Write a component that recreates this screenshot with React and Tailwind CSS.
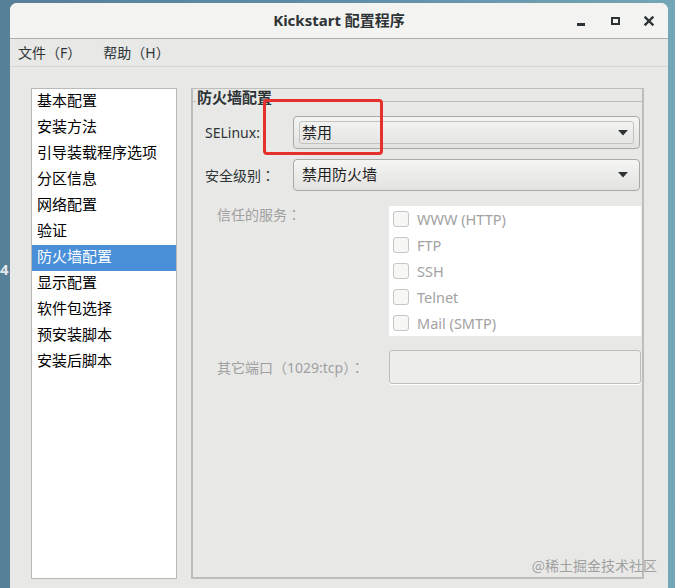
import React from "react";

const items = [
  "基本配置",
  "安装方法",
  "引导装载程序选项",
  "分区信息",
  "网络配置",
  "验证",
  "防火墙配置",
  "显示配置",
  "软件包选择",
  "预安装脚本",
  "安装后脚本",
];

const services = ["WWW (HTTP)", "FTP", "SSH", "Telnet", "Mail (SMTP)"];

function Colon() {
  return <span className="font-['Noto_Sans_CJK_JP',sans-serif]">：</span>;
}

function Arrow() {
  return (
    <svg width="10" height="6" viewBox="0 0 10 6" className="shrink-0">
      <polygon points="0,0 10,0 5,5.5" fill="#2e3436" />
    </svg>
  );
}

function Combo({ text, focused }) {
  return (
    <div className="flex-1 h-full rounded-[4px] border border-[#a9a9a7] bg-gradient-to-b from-[#f5f5f4] to-[#e2e2e1] px-[5px] py-[4px] flex">
      <div
        className={
          "flex-1 flex items-center pl-[2px] pr-[5px] rounded-[3px] border " +
          (focused ? "border-[#c2c2c0]" : "border-transparent")
        }
      >
        <span className="flex-1 text-[15px] text-[#1e1e1e] leading-none pb-[1px]">{text}</span>
        <Arrow />
      </div>
    </div>
  );
}

export default function App() {
  return (
    <div className="relative w-[675px] h-[588px] overflow-hidden bg-gradient-to-r from-[#567f98] via-[#5f8ea6] to-[#73a6b7] font-['Noto_Sans','Noto_Sans_CJK_SC',sans-serif] flex">
      <span className="absolute left-[0px] top-[259px] text-[15px] font-bold text-[#e4e8ea] leading-[20px]">4</span>

      <div className="ml-[10px] mt-[3px] w-[658px] h-[585px] flex flex-col bg-[#e8e8e7] rounded-t-[7px] overflow-hidden">
        {/* Title bar */}
        <div className="h-[36px] shrink-0 bg-[#f3f3f2] border-b border-[#b0b0ad] grid grid-cols-[1fr_auto_1fr] items-center">
          <div />
          <div className="text-[15px] font-bold text-[#2e3436] leading-none">Kickstart 配置程序</div>
          <div className="flex justify-end pr-[2px] h-full items-center">
            <div className="w-[34px] h-[20px] flex items-center justify-center">
              <div className="w-[8px] h-[3px] bg-[#2e3436] mt-[7px]" />
            </div>
            <div className="w-[34px] h-[20px] flex items-center justify-center">
              <div className="w-[9px] h-[8px] border-2 border-[#2e3436]" />
            </div>
            <div className="w-[34px] h-[20px] flex items-center justify-center">
              <svg width="10" height="10" viewBox="0 0 10 10">
                <path d="M1.5 1.5 L8.5 8.5 M8.5 1.5 L1.5 8.5" stroke="#2e3436" strokeWidth="2.4" strokeLinecap="square" />
              </svg>
            </div>
          </div>
        </div>

        {/* Menu bar */}
        <div className="h-[28px] shrink-0 border-b border-[#d6d6d4] flex items-center text-[14px] text-[#2e3436] gap-[6px]">
          <span className="px-[8px]">文件（F）</span>
          <span className="px-[8px]">帮助（H）</span>
        </div>

        {/* Content */}
        <div className="flex-1 flex pt-[21px] pl-[21px] pr-[24px] pb-[9px] gap-[14px]">
          {/* Sidebar list */}
          <div className="w-[146px] bg-white border border-[#b9b9b7] flex flex-col">
            {items.map((t, i) => (
              <div
                key={t}
                className={
                  "h-[26px] shrink-0 flex items-center pl-[5px] pb-[3px] text-[15px] leading-none " +
                  (i === 6 ? "bg-[#4a90d9] text-white" : "text-black")
                }
              >
                {t}
              </div>
            ))}
          </div>

          {/* Frame */}
          <div className="relative flex-1 border-t border-x-2 border-b-2 border-[#bdbdbb] flex flex-col">
            {/* legend row */}
            <div className="flex h-[22px] shrink-0">
              <div className="w-[3px] h-px bg-[#bdbdbb] mt-[12px]" />
              <span className="text-[15px] font-bold text-[#2e3436] leading-[17px] px-px">防火墙配置</span>
              <div className="flex-1 h-px bg-[#bdbdbb] mt-[12px]" />
            </div>

            <div className="flex flex-col pl-[12px] pr-[2px]">
              <div className="flex items-center h-[33px] mt-[5px]">
                <span className="w-[88px] text-[14px] text-[#2e3436]">SELinux:</span>
                <Combo text="禁用" focused />
              </div>
              <div className="flex items-center h-[32px] mt-[10px]">
                <span className="w-[88px] text-[14px] text-[#2e3436]">安全级别<Colon /></span>
                <Combo text="禁用防火墙" />
              </div>

              <div className="flex mt-[15px]">
                <span className="w-[184px] pl-[12px] text-[14px] leading-[16px] text-[#a0a0a0]">信任的服务<Colon /></span>
                <div className="flex-1 -mr-px bg-white h-[130px] flex flex-col">
                  {services.map((s) => (
                    <div key={s} className="h-[26px] flex items-center pl-[4px] gap-[8px]">
                      <div className="w-[16px] h-[16px] rounded-[3px] border border-[#c6c6c4] bg-[#f7f7f6]" />
                      <span className="text-[14.5px] text-[#a2a2a2] leading-none">{s}</span>
                    </div>
                  ))}
                </div>
              </div>

              <div className="flex items-center h-[34px] mt-[14px]">
                <span className="w-[184px] pl-[12px] text-[14px] text-[#a0a0a0]">其它端口（1029:tcp）<Colon /></span>
                <div className="flex-1 -mr-px h-full rounded-[3px] border border-[#bebebc] bg-[#ededec] shadow-[0_1px_0_#ffffff]" />
              </div>
            </div>

            {/* red annotation */}
            <div className="absolute left-[70px] top-[10px] w-[120px] h-[56px] border-[3px] border-[#e5302b] rounded-[4px]" />
          </div>
        </div>
      </div>

      <span className="absolute right-[18px] top-[555px] text-[14px] text-[#8c8c8c]/80 font-['Noto_Sans_CJK_SC',sans-serif] leading-[20px]">
        @稀土掘金技术社区
      </span>
    </div>
  );
}
